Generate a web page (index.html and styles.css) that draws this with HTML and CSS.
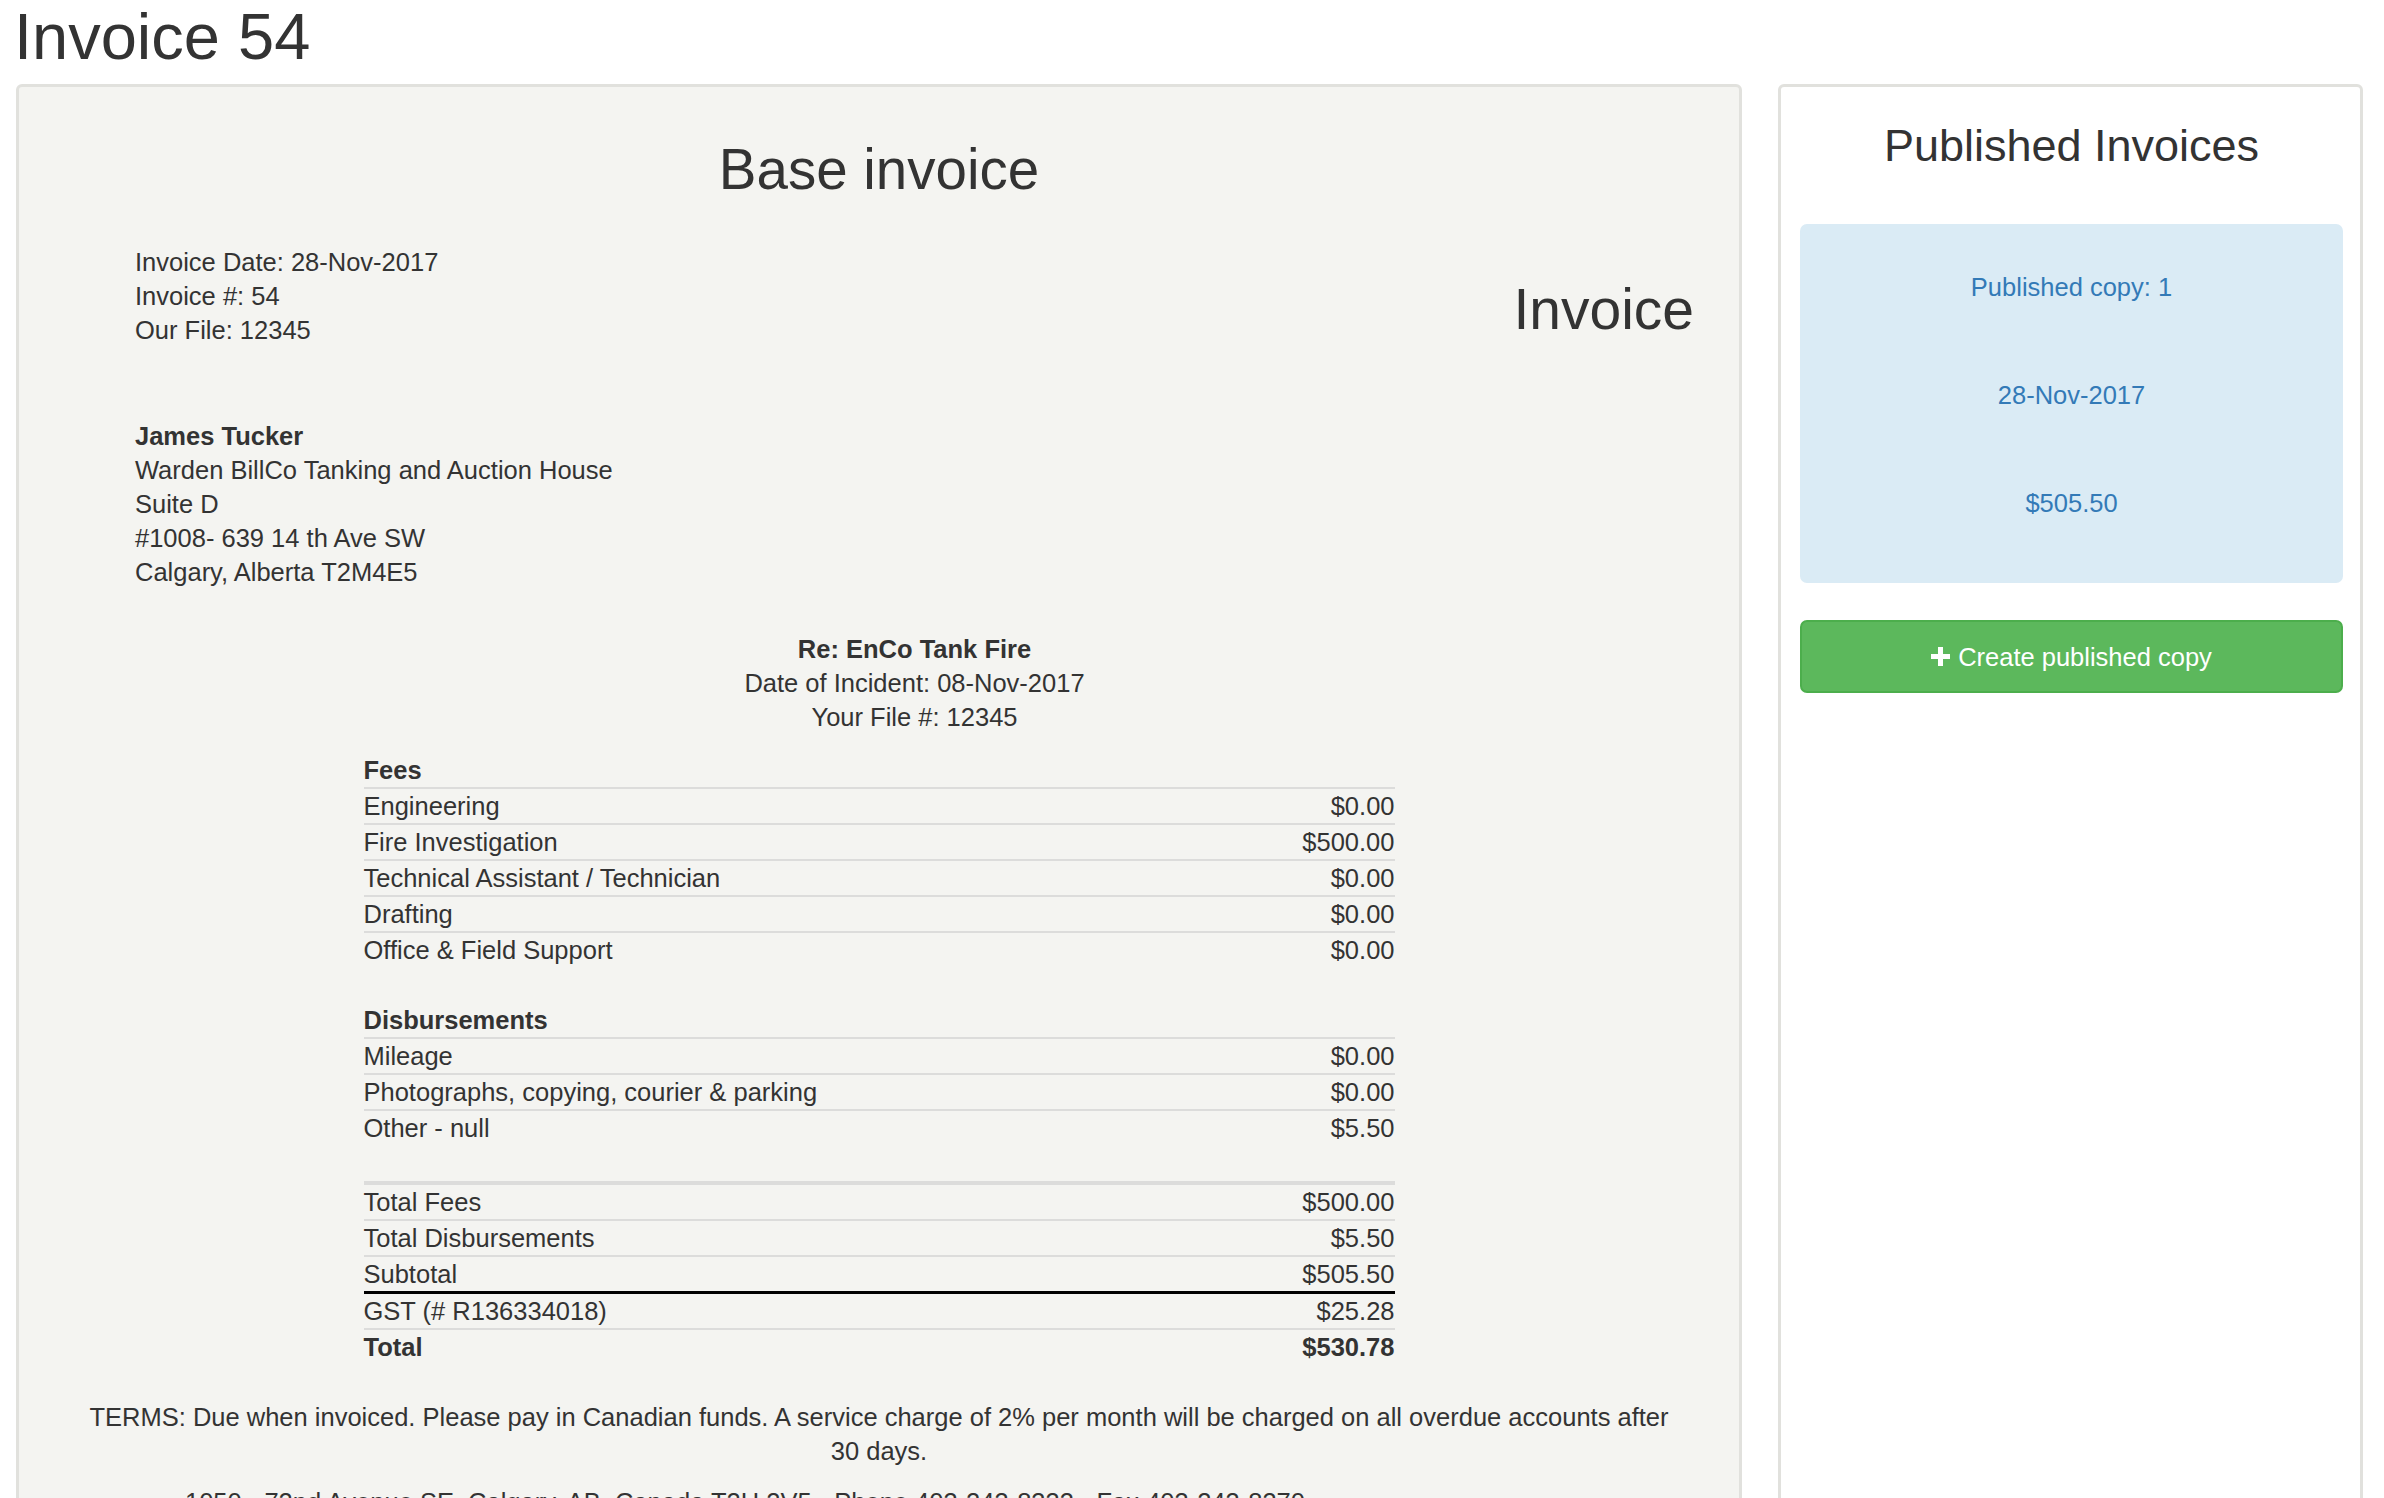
FILE: index.html
```html
<!DOCTYPE html>
<html lang="en">
<head>
<meta charset="utf-8">
<title>Invoice 54</title>
<link rel="stylesheet" href="styles.css">
</head>
<body>
  <h1 class="page-title">Invoice 54</h1>
  <div class="layout">
    <section class="invoice-well">
      <h2 class="doc-title">Base invoice</h2>
      <div class="doc-body">
        <div class="doc-header">
          <div class="meta">
            <div>Invoice Date: 28-Nov-2017</div>
            <div>Invoice #: 54</div>
            <div>Our File: 12345</div>
          </div>
          <h2 class="doc-kind">Invoice</h2>
        </div>
        <address class="recipient">
          <strong>James Tucker</strong>
          <div>Warden BillCo Tanking and Auction House</div>
          <div>Suite D</div>
          <div>#1008- 639 14 th Ave SW</div>
          <div>Calgary, Alberta T2M4E5</div>
        </address>
        <div class="re">
          <strong>Re: EnCo Tank Fire</strong>
          <div>Date of Incident: 08-Nov-2017</div>
          <div>Your File #: 12345</div>
        </div>
      </div>

      <div class="ledger">
        <div class="ledger-group">
          <div class="ledger-head">Fees</div>
          <div class="ledger-row"><span>Engineering</span><span>$0.00</span></div>
          <div class="ledger-row"><span>Fire Investigation</span><span>$500.00</span></div>
          <div class="ledger-row"><span>Technical Assistant / Technician</span><span>$0.00</span></div>
          <div class="ledger-row"><span>Drafting</span><span>$0.00</span></div>
          <div class="ledger-row"><span>Office &amp; Field Support</span><span>$0.00</span></div>
        </div>
        <div class="ledger-group">
          <div class="ledger-head">Disbursements</div>
          <div class="ledger-row"><span>Mileage</span><span>$0.00</span></div>
          <div class="ledger-row"><span>Photographs, copying, courier &amp; parking</span><span>$0.00</span></div>
          <div class="ledger-row"><span>Other - null</span><span>$5.50</span></div>
        </div>
        <div class="ledger-totals">
          <div class="ledger-row first"><span>Total Fees</span><span>$500.00</span></div>
          <div class="ledger-row"><span>Total Disbursements</span><span>$5.50</span></div>
          <div class="ledger-row"><span>Subtotal</span><span>$505.50</span></div>
          <div class="ledger-row tax"><span>GST (# R136334018)</span><span>$25.28</span></div>
          <div class="ledger-row grand"><span>Total</span><span>$530.78</span></div>
        </div>
      </div>

      <p class="terms">TERMS: Due when invoiced. Please pay in Canadian funds. A service charge of 2% per month will be charged on all overdue accounts after 30 days.</p>
      <p class="footer-addr">1050 - 72nd Avenue SE, Calgary, AB, Canada T2H 2V5 - Phone 403-243-8333 - Fax 403-243-8370</p>
    </section>

    <aside class="published">
      <h3 class="published-title">Published Invoices</h3>
      <div class="copy-card">
        <a href="#" class="copy-line">Published copy: 1</a>
        <a href="#" class="copy-line">28-Nov-2017</a>
        <a href="#" class="copy-line">$505.50</a>
      </div>
      <button class="btn-create" type="button">
        <svg class="plus" width="19" height="19" viewBox="0 0 19 19" aria-hidden="true"><rect x="7" y="0" width="5" height="19" fill="#fff"/><rect x="0" y="7" width="19" height="5" fill="#fff"/></svg>
        <span>Create published copy</span>
      </button>
    </aside>
  </div>
</body>
</html>
```

FILE: styles.css
```css
html, body {
  margin: 0;
  background: #fff;
}

body {
  padding: 0 21px 0 16px;
  font-family: "Liberation Sans", Arial, sans-serif;
  font-size: 25.5px;
  line-height: 34px;
  color: #333;
}

.page-title {
  margin: 0 0 11px -2px;
  font-size: 65px;
  line-height: 73px;
  font-weight: normal;
  color: #333;
}

.layout {
  display: flex;
  align-items: stretch;
  gap: 36px;
}

.invoice-well {
  flex: 0 0 1726px;
  box-sizing: border-box;
  background: #f4f4f1;
  border: 3px solid #e1e1dd;
  border-radius: 6px;
  padding: 53px 0 80px;
}

.doc-title {
  margin: 0;
  text-align: center;
  font-size: 56.5px;
  line-height: 60px;
  font-weight: normal;
}

.doc-body {
  padding: 0 45px 0 116px;
}

.doc-header {
  margin-top: 45px;
  display: flex;
  justify-content: space-between;
  align-items: flex-start;
}

.doc-kind {
  margin: 34px 0 0;
  font-size: 57px;
  line-height: 60px;
  font-weight: normal;
}

.recipient {
  margin-top: 72px;
  font-style: normal;
}

.recipient strong,
.re strong {
  display: block;
}

.re {
  margin-top: 43px;
  text-align: center;
}

.ledger {
  width: 1031px;
  margin: 19px auto 0;
}

.ledger-group + .ledger-group {
  margin-top: 36px;
}

.ledger-head {
  font-weight: bold;
}

.ledger-row {
  display: flex;
  justify-content: space-between;
  border-top: 2px solid #dcdcdb;
}

.ledger-totals {
  margin-top: 36px;
  border-top: 4px solid #dcdcdb;
}

.ledger-totals .ledger-row.first {
  border-top: none;
}

.ledger-row.tax {
  border-top: 3px solid #000;
}

.ledger-row.grand {
  font-weight: bold;
}

.terms {
  width: 1590px;
  margin: 36px auto 0;
  text-align: center;
}

.footer-addr {
  margin: 17px 0 0 166px;
}

.published {
  flex: 0 0 585px;
  box-sizing: border-box;
  background: #fff;
  border: 3px solid #e1e1dd;
  border-radius: 6px;
  padding: 35px 17px 40px 19px;
}

.published-title {
  margin: 0;
  text-align: center;
  font-size: 45px;
  line-height: 48px;
  font-weight: normal;
  color: #333;
}

.copy-card {
  margin-top: 54px;
  height: 359px;
  box-sizing: border-box;
  background: #daebf5;
  border-radius: 7px;
  padding: 46px 0 63px;
  display: flex;
  flex-direction: column;
  align-items: center;
  gap: 74px;
}

.copy-line {
  color: #337ab7;
  text-decoration: none;
}

.btn-create {
  margin-top: 37px;
  width: 100%;
  height: 73px;
  box-sizing: border-box;
  display: flex;
  align-items: center;
  justify-content: center;
  gap: 8px;
  background: #5cb85c;
  border: 2px solid #4cae4c;
  border-radius: 7px;
  color: #fff;
  font-family: "Liberation Sans", Arial, sans-serif;
  font-size: 25.5px;
  line-height: 34px;
  padding: 0;
  cursor: pointer;
}

.plus {
  display: block;
  flex: none;
}
```
